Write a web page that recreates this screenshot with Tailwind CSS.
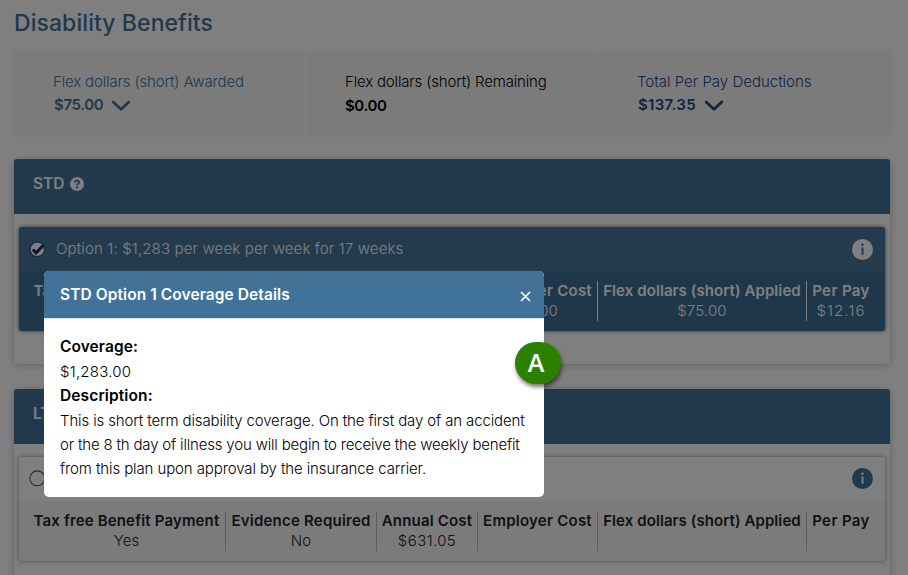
<!DOCTYPE html>
<html lang="en">
<head>
<meta charset="utf-8">
<title>Disability Benefits</title>
<script src="https://cdn.jsdelivr.net/npm/@tailwindcss/browser@4"></script>
</head>
<body class="relative h-[575px] overflow-hidden bg-white font-['Inter','Liberation_Sans',sans-serif] text-[15px] font-light text-black">
<main class="flex h-[575px] flex-col overflow-hidden px-[14px]">
  <h1 class="mt-[5px] h-9 shrink-0 text-[23px] leading-9 font-medium tracking-[0.07px] text-[#417299]">Disability Benefits</h1>

  <section class="mt-[12px] grid h-[82px] w-[877px] shrink-0 grid-cols-[290px_290px_293px] gap-x-[2px] rounded-[3px] bg-[#fdfdfd] shadow-[0_0_3px_rgba(0,0,0,0.15)]">
    <div class="rounded-l-[3px] bg-[#f7f7f7] pt-[18px] pl-10 text-[#417299]">
      <p class="-ml-px h-[21px] leading-[21px] tracking-[-0.15px] whitespace-nowrap">Flex dollars (short) Awarded</p>
      <p class="mt-px flex h-6 items-center text-[15px] font-semibold tracking-[-0.35px]">$75.00
        <svg class="mt-[2px] ml-[8px]" width="20" height="12" viewBox="0 0 20 12" fill="none" stroke="currentColor" stroke-width="2.8" stroke-linecap="round" stroke-linejoin="round"><path d="M2.2 2 L10 9.3 L17.8 2"/></svg>
      </p>
    </div>
    <div class="bg-[#f7f7f7] pt-[18px] pl-[39px]">
      <p class="h-[21px] leading-[21px] tracking-[-0.17px] whitespace-nowrap">Flex dollars (short) Remaining</p>
      <p class="mt-px flex h-6 items-center pt-[2px] text-[15px] font-semibold tracking-[-0.4px]">$0.00</p>
    </div>
    <div class="rounded-r-[3px] bg-[#f7f7f7] pt-[18px] pl-10 text-[#1f4788]">
      <p class="-ml-px h-[21px] leading-[21px] whitespace-nowrap">Total Per Pay Deductions</p>
      <p class="mt-px flex h-6 items-center text-[15px] font-semibold tracking-[0.3px]">$137.35
        <svg class="mt-[2px] ml-[8px]" width="20" height="12" viewBox="0 0 20 12" fill="none" stroke="currentColor" stroke-width="2.8" stroke-linecap="round" stroke-linejoin="round"><path d="M2.2 2 L10 9.3 L17.8 2"/></svg>
      </p>
    </div>
  </section>

  <section class="mt-6 h-[205px] w-[876px] shrink-0 rounded bg-white shadow-[0_1px_7px_rgba(0,0,0,0.24)]">
    <h2 class="flex h-[55px] items-center gap-[5px] rounded-t-[3px] bg-[#417299] pb-[5px] pl-[19px] text-[15.5px] font-semibold text-white">STD
      <svg width="14" height="14" viewBox="0 0 14 14"><circle cx="7" cy="7" r="7" fill="#fff"/><path d="M4.9 5.4 C4.9 3 9.1 3 9.1 5.3 C9.1 6.8 7 6.7 7 8.3" fill="none" stroke="#417299" stroke-width="1.7"/><circle cx="7" cy="10.4" r="1.1" fill="#417299"/></svg>
    </h2>
    <div class="mt-[13px] ml-[5px] h-[104px] w-[866px] overflow-hidden rounded-[3px] bg-[#3f6f96] text-white shadow-[0_0_4px_rgba(0,0,0,0.6)]">
      <div class="flex h-11 items-center bg-[#48769c] pr-3 pl-[10px]">
        <svg width="17" height="17" viewBox="0 0 17 17"><circle cx="8.3" cy="8.3" r="7.2" fill="#fff" stroke="#1b376c" stroke-width="1"/><path d="M3.8 8.5 L7.1 11.8 L14.8 3.7" fill="none" stroke="#12305f" stroke-width="2.9"/></svg>
        <span class="ml-[10px] tracking-[0.15px]">Option 1: $1,283 per week per week for 17 weeks</span>
        <svg class="ml-auto" width="21" height="21" viewBox="0 0 21 21"><circle cx="10.5" cy="10.5" r="10.5" fill="#fff"/><circle cx="10.5" cy="5.7" r="1.2" fill="#48769c"/><path d="M10.5 8.4 V15.8" stroke="#48769c" stroke-width="2"/></svg>
      </div>
      <div class="grid grid-cols-[198px_151px_101px_120px_209px_68px] pt-[10px] pl-[9px] text-center leading-5 whitespace-nowrap">
        <div class="h-10 border-r border-white"><p class="font-semibold tracking-[0.16px]">Tax free Benefit Payment</p><p>Yes</p></div>
        <div class="h-10 border-r border-white"><p class="font-semibold tracking-[0.22px]">Evidence Required</p><p>No</p></div>
        <div class="h-10 border-r border-white"><p class="font-semibold tracking-[0.18px]">Annual Cost</p><p class="tracking-[0.4px]">$632.32</p></div>
        <div class="h-10 border-r border-white"><p class="font-semibold tracking-[0.25px]">Employer Cost</p><p>$0.00</p></div>
        <div class="h-10 border-r border-white"><p class="font-semibold tracking-[0.08px]">Flex dollars (short) Applied</p><p class="tracking-[0.15px]">$75.00</p></div>
        <div class="h-10"><p class="font-semibold tracking-[0.4px]">Per Pay</p><p class="tracking-[1.1px]">$12.16</p></div>
      </div>
    </div>
  </section>

  <section class="mt-[25px] h-[230px] w-[876px] shrink-0 rounded bg-white shadow-[0_1px_7px_rgba(0,0,0,0.24)]">
    <h2 class="flex h-[55px] items-center rounded-t-[3px] bg-[#417299] pb-[5px] pl-[19px] text-[15.5px] font-semibold text-white">LTD</h2>
    <div class="mt-3 ml-1 h-[106px] w-[868px] overflow-hidden rounded-[3px] border border-[#d0d0d0] bg-[#f7f7f7] shadow-[0_0_4px_rgba(0,0,0,0.25)]">
      <div class="flex h-11 items-center bg-white pr-3 pb-px pl-[10px]">
        <svg width="17" height="17" viewBox="0 0 17 17"><circle cx="8.3" cy="8.3" r="7.4" fill="#fff" stroke="#555" stroke-width="1.1"/></svg>
        <svg class="ml-auto" width="21" height="21" viewBox="0 0 21 21"><circle cx="10.5" cy="10.5" r="10.5" fill="#417299"/><circle cx="10.5" cy="5.7" r="1.2" fill="#fff"/><path d="M10.5 8.4 V15.8" stroke="#fff" stroke-width="2"/></svg>
      </div>
      <div class="grid grid-cols-[198px_151px_101px_120px_209px_68px] pt-[10px] pl-[9px] text-center leading-5 whitespace-nowrap text-[#212529]">
        <div class="h-10 border-r border-[#bbb]"><p class="font-semibold tracking-[0.16px]">Tax free Benefit Payment</p><p>Yes</p></div>
        <div class="h-10 border-r border-[#bbb]"><p class="font-semibold tracking-[0.22px]">Evidence Required</p><p>No</p></div>
        <div class="h-10 border-r border-[#bbb]"><p class="font-semibold tracking-[0.18px]">Annual Cost</p><p class="tracking-[0.4px]">$631.05</p></div>
        <div class="h-10 border-r border-[#bbb]"><p class="font-semibold tracking-[0.25px]">Employer Cost</p></div>
        <div class="h-10 border-r border-[#bbb]"><p class="font-semibold tracking-[0.08px]">Flex dollars (short) Applied</p></div>
        <div class="h-10"><p class="font-semibold tracking-[0.4px]">Per Pay</p></div>
      </div>
    </div>
  </section>
</main>

<div class="absolute inset-0 bg-black/50"></div>

<div class="absolute top-[271px] left-[44px] h-[226px] w-[500px] overflow-hidden rounded-[5px] bg-white" role="dialog">
  <div class="flex h-12 items-center justify-between border-b border-[#dee2e6] bg-[#417299] pr-[13px] pl-4 text-white">
    <h3 class="text-[15.5px] font-semibold tracking-[0.08px]">STD Option 1 Coverage Details</h3>
    <svg class="mt-[3px]" width="11" height="11" viewBox="0 0 11 11" stroke="#fff" stroke-width="1.7"><path d="M1 1 L10 10 M10 1 L1 10"/></svg>
  </div>
  <div class="px-4 pt-4 leading-6 whitespace-nowrap">
    <p class="text-[15.5px] font-semibold tracking-[0.07px]">Coverage:</p>
    <p class="pt-px tracking-[0.25px]">$1,283.00</p>
    <p class="text-[15.5px] font-semibold tracking-[0.12px]">Description:</p>
    <p class="pt-px tracking-[-0.13px]">This is short term disability coverage. On the first day of an accident<br><span class="tracking-[-0.18px]">or the 8 th day of illness you will begin to receive the weekly benefit</span><br><span class="tracking-[-0.11px]">from this plan upon approval by the insurance carrier.</span></p>
  </div>
</div>

<div class="absolute top-[342px] left-[515px] flex h-[42px] w-[46px] items-center justify-center rounded-[21px] bg-[#2c8000] pr-1 pb-[2px] font-['Open_Sans',sans-serif] text-[25px] leading-none font-semibold text-white shadow-[1px_3px_4px_rgba(0,0,0,0.55)]">A</div>
</body>
</html>
